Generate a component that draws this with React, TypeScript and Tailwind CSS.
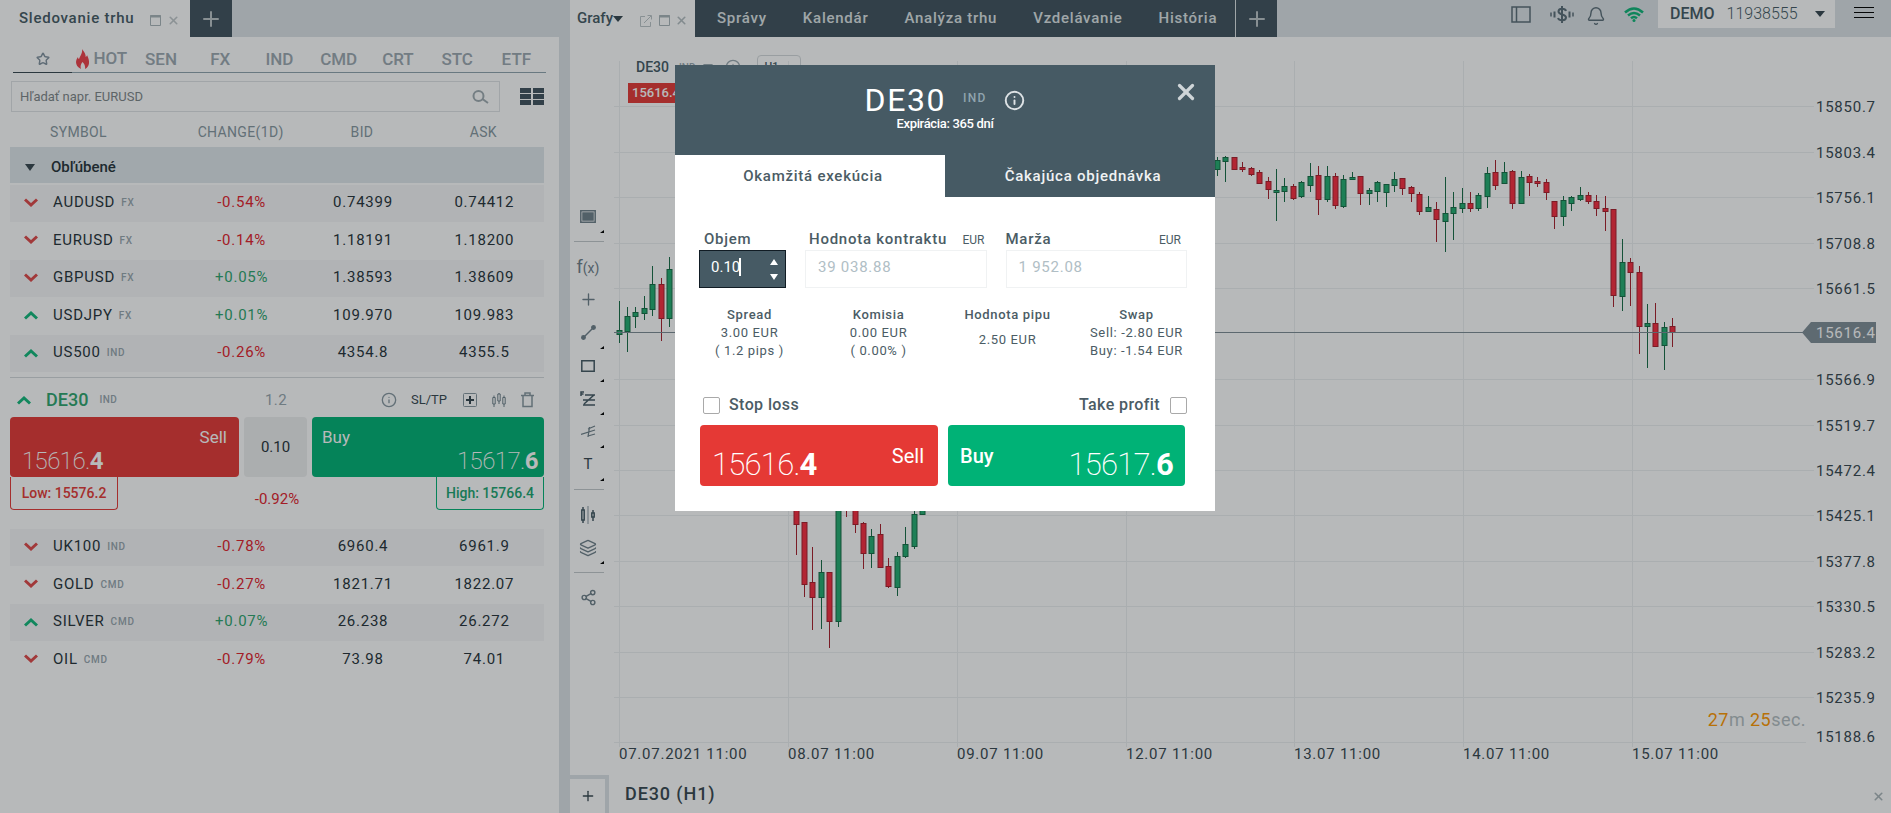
import { Bell, Info, Layers, Plus, Share2, Star, X } from 'lucide-react'
import type { ReactNode } from 'react'

type Quote = { symbol: string; group: string; up: boolean; change: string; bid: string; ask: string }

const quotes: Quote[] = [
  { symbol: 'AUDUSD', group: 'FX', up: false, change: '-0.54%', bid: '0.74399', ask: '0.74412' },
  { symbol: 'EURUSD', group: 'FX', up: false, change: '-0.14%', bid: '1.18191', ask: '1.18200' },
  { symbol: 'GBPUSD', group: 'FX', up: false, change: '+0.05%', bid: '1.38593', ask: '1.38609' },
  { symbol: 'USDJPY', group: 'FX', up: true, change: '+0.01%', bid: '109.970', ask: '109.983' },
  { symbol: 'US500', group: 'IND', up: true, change: '-0.26%', bid: '4354.8', ask: '4355.5' },
]

const moreQuotes: Quote[] = [
  { symbol: 'UK100', group: 'IND', up: false, change: '-0.78%', bid: '6960.4', ask: '6961.9' },
  { symbol: 'GOLD', group: 'CMD', up: false, change: '-0.27%', bid: '1821.71', ask: '1822.07' },
  { symbol: 'SILVER', group: 'CMD', up: true, change: '+0.07%', bid: '26.238', ask: '26.272' },
  { symbol: 'OIL', group: 'CMD', up: false, change: '-0.79%', bid: '73.98', ask: '74.01' },
]

// [slot, rising, high, body top, body bottom, low]
const candles: number[][] = [
  [0, 1, 301, 330, 335, 343], [1, 1, 307, 316, 332, 352], [2, 1, 307, 312, 317, 328], [3, 1, 296, 308, 314, 320],
  [4, 1, 266, 284, 310, 316], [5, 0, 278, 284, 319, 341], [6, 1, 257, 269, 319, 327],
  [21, 0, 500, 500, 525, 555], [22, 0, 522, 522, 585, 597], [23, 0, 547, 582, 598, 630], [24, 1, 560, 572, 598, 629],
  [25, 0, 572, 572, 622, 648], [26, 1, 480, 480, 622, 627], [27, 0, 490, 490, 505, 517], [28, 0, 490, 490, 525, 533],
  [29, 0, 522, 523, 554, 569], [30, 1, 529, 536, 554, 568], [31, 0, 524, 534, 568, 568], [32, 0, 558, 566, 587, 588],
  [33, 1, 552, 556, 588, 596], [34, 1, 527, 544, 557, 558], [35, 1, 505, 514, 547, 549], [36, 1, 500, 500, 515, 515],
  [71, 1, 157, 160, 170, 176], [72, 1, 156, 157, 162, 182], [73, 0, 157, 157, 170, 170], [74, 0, 162, 167, 170, 172],
  [75, 0, 167, 168, 175, 176], [76, 0, 170, 172, 184, 184], [77, 0, 177, 181, 190, 199], [78, 1, 169, 190, 193, 221],
  [79, 1, 178, 186, 192, 202], [80, 0, 184, 186, 199, 200], [81, 1, 181, 182, 197, 198], [82, 1, 163, 176, 186, 192],
  [83, 0, 166, 175, 200, 215], [84, 1, 166, 176, 200, 202], [85, 0, 173, 176, 206, 209], [86, 1, 175, 179, 207, 208],
  [87, 1, 172, 177, 180, 180], [88, 0, 176, 176, 194, 205], [89, 1, 188, 190, 194, 205], [90, 1, 181, 182, 192, 202],
  [91, 1, 184, 184, 193, 207], [92, 1, 172, 179, 186, 192], [93, 0, 178, 178, 189, 195], [94, 0, 186, 187, 194, 202],
  [95, 0, 192, 194, 212, 215], [96, 1, 196, 207, 212, 212], [97, 0, 202, 209, 220, 242], [98, 1, 177, 213, 222, 252],
  [99, 1, 192, 207, 214, 240], [100, 1, 188, 203, 209, 213], [101, 0, 192, 203, 209, 212], [102, 1, 193, 195, 209, 211],
  [103, 1, 167, 173, 197, 208], [104, 0, 160, 172, 186, 190], [105, 1, 162, 172, 184, 184], [106, 0, 170, 171, 204, 209],
  [107, 1, 171, 177, 204, 204], [108, 0, 174, 176, 183, 196], [109, 0, 177, 181, 184, 187], [110, 0, 179, 182, 193, 200],
  [111, 0, 201, 201, 217, 229], [112, 1, 196, 200, 217, 226], [113, 1, 196, 197, 204, 211], [114, 1, 187, 195, 200, 201],
  [115, 0, 192, 195, 202, 204], [116, 0, 195, 201, 209, 216], [117, 0, 196, 208, 212, 231], [118, 0, 209, 209, 296, 307],
  [119, 1, 239, 262, 297, 311], [120, 0, 258, 262, 273, 306], [121, 0, 266, 272, 327, 354], [122, 1, 304, 323, 327, 368],
  [123, 0, 303, 323, 347, 347], [124, 1, 322, 327, 346, 370], [125, 0, 318, 326, 333, 347],
]

const priceLines: [number, string][] = [
  [106, '15850.7'], [152, '15803.4'], [197, '15756.1'], [243, '15708.8'], [288, '15661.5'], [379, '15566.9'],
  [425, '15519.7'], [470, '15472.4'], [515, '15425.1'], [561, '15377.8'], [606, '15330.5'], [652, '15283.2'], [697, '15235.9'],
]

const days: [number, string][] = [
  [619, '07.07.2021 11:00'], [788, '08.07 11:00'], [957, '09.07 11:00'], [1126, '12.07 11:00'],
  [1294, '13.07 11:00'], [1463, '14.07 11:00'], [1632, '15.07 11:00'],
]

function Chevron({ up }: { up: boolean }) {
  return (
    <svg width="14" height="10" viewBox="0 0 14 10" fill="none" strokeWidth="3" className={up ? 'stroke-[#12b87a]' : 'stroke-[#e04848]'}>
      <path d={up ? 'M1 8.5 7 3l6 5.5' : 'M1 1.5 7 7l6-5.5'} />
    </svg>
  )
}

function WindowIcon() {
  return (
    <svg width="11" height="11" viewBox="0 0 11 11" fill="none" className="stroke-[#aab5b9]">
      <path d="M.5 .5h10v10H.5z" />
      <path d="M0 1.5h11" strokeWidth="2" />
    </svg>
  )
}

function QuoteRow({ quote, index }: { quote: Quote; index: number }) {
  return (
    <tr className={index % 2 === 0 ? 'h-[37px] bg-[#f7f7f8] *:pb-0.5' : 'h-[38px] *:pb-0.5'}>
      <td>
        <div className="flex items-center pl-3.5">
          <Chevron up={quote.up} />
          <span className="ml-[15px]">{quote.symbol}</span>
          <span className="ml-1.5 text-[10px] font-medium text-[#98a6ae]">{quote.group}</span>
        </div>
      </td>
      <td className={quote.change.startsWith('-') ? 'pl-0.5 text-[#e3212c]' : 'pl-0.5 text-[#2ea56e]'}>{quote.change}</td>
      <td className="pl-0.5">{quote.bid}</td>
      <td className="pl-0.5">{quote.ask}</td>
    </tr>
  )
}

function ExpandedQuote() {
  return (
    <div className="mt-[5px] h-[152px] border-t border-[#d5d9dc] text-left tracking-normal">
      <div className="flex h-[39px] items-center pt-1">
        <div className="flex w-[234px] items-center pl-[7px]">
          <Chevron up />
          <span className="ml-[15px] text-lg font-medium text-[#2ea56e]">DE30</span>
          <span className="ml-[11px] text-[10px] font-medium tracking-wider text-[#98a6ae]">IND</span>
        </div>
        <span className="w-16 pt-0.5 text-center text-[15px] tracking-wide text-[#98a6ae]">1.2</span>
        <div className="flex flex-1 items-center justify-end pr-2.5 text-[#8797a0]">
          <button aria-label="Info"><Info size={16} strokeWidth={2} /></button>
          <button className="ml-3.5 text-[13px] text-[#37474f]">SL/TP</button>
          <button aria-label="Nový pokyn" className="ml-4">
            <svg width="14" height="14" viewBox="0 0 14 14" fill="none" className="stroke-[#8797a0]">
              <rect x=".5" y=".5" width="13" height="13" rx="1" />
              <path d="M7 3v8M3 7h8" strokeWidth="2" className="stroke-[#37474f]" />
            </svg>
          </button>
          <button aria-label="Graf" className="ml-[15px]">
            <svg width="14" height="14" viewBox="0 0 14 14" fill="none" className="stroke-[#6f808a]">
              <path d="M2 2.500v2M2 11v3M7 0v1M7 8v3M12 2.500v2M12 11v3M.8 4.500h2.400v6.500H.8zM5.800 1h2.400v7H5.800zM10.800 4.500h2.400v6.500h-2.400z" />
            </svg>
          </button>
          <button aria-label="Odstrániť" className="ml-[15px]">
            <svg width="13" height="16" viewBox="0 0 13 16" fill="none" strokeWidth="1.500" className="stroke-[#8797a0]">
              <path d="M0 3.500h13M4 3V1h5v2M2 3.500v11h9v-11" />
            </svg>
          </button>
        </div>
      </div>
      <div className="flex gap-[5px]">
        <button className="relative h-[60px] w-[229px] rounded bg-[#e53935] text-white">
          <span className="absolute right-3 top-2 text-[17px]">Sell</span>
          <span className="absolute bottom-1 left-3 text-2xl leading-6 font-extralight tracking-tight">15616.<b className="font-bold">4</b></span>
        </button>
        <label className="flex w-[63px] items-center justify-center rounded bg-[#eeeff0] text-[15px]">
          <input aria-label="Objem DE30" defaultValue="0.10" className="w-10 bg-transparent text-center outline-none" />
        </label>
        <button className="relative h-[60px] flex-1 rounded bg-[#00b274] text-white">
          <span className="absolute left-2.5 top-2 text-[17px]">Buy</span>
          <span className="absolute bottom-1 right-1.5 text-2xl leading-6 font-extralight tracking-tight">15617.<b className="font-bold">6</b></span>
        </button>
      </div>
      <div className="flex h-[33px] justify-between text-[14px] font-medium">
        <span className="flex w-[108px] items-center justify-center rounded-b border border-t-0 border-[#e53935] pt-px text-[#e53935]">Low: 15576.2</span>
        <span className="flex items-end pb-px text-[15px] leading-5 font-normal text-[#e3212c]">-0.92%</span>
        <span className="flex w-[108px] items-center justify-center rounded-b border border-t-0 border-[#00b274] pt-px text-[#1ba570]">High: 15766.4</span>
      </div>
    </div>
  )
}

function MarketWatch() {
  return (
    <aside className="flex w-[559px] shrink-0 flex-col bg-white">
      <div className="flex h-[37px] bg-[#dde3e7]">
        <div className="flex items-center bg-white pl-[19px] pr-2.5 text-[15px] font-medium tracking-wider text-[#455a64]">
          <span className="w-[131px]">Sledovanie trhu</span>
          <span className="mt-1 flex items-center gap-1.5"><WindowIcon /><X size={13} strokeWidth={3} className="text-[#c0c7ca]" /></span>
        </div>
        <button aria-label="Pridať" className="flex w-[42px] items-center justify-center bg-[#41525d] text-[#bcc4c8]"><Plus size={24} /></button>
      </div>
      <div className="pl-2.5 pr-[15px]">
        <nav className="ml-[3px] mr-[-2px] mt-2 flex h-7 items-stretch text-center text-[17px] font-medium text-[#9ca8b0]">
          <button aria-label="Obľúbené" className="flex flex-1 items-center justify-center border-b border-[#37474f] pt-px"><Star size={14} strokeWidth={2.5} className="text-[#8393a0]" /></button>
          <button className="flex flex-1 items-center justify-center gap-1 border-b border-[#90a4ae] pt-px">
            <svg width="13" height="20" viewBox="0 0 13 20" className="shrink-0 fill-[#f0414a]">
              <path d="M6 0c3 4 4 6 3.500 8 1-.5 1.500-1 1.500-2 3 6 3 11-2 14 .5-3-.5-5-2.500-7-1.500 2-2.500 4-1.500 7C-1 17-1 12 2 8c0 1 .5 2 1 2C4 7 7 4 6 0z" />
            </svg>
            HOT
          </button>
          {['SEN', 'FX', 'IND', 'CMD', 'CRT', 'STC', 'ETF'].map((tab) => (
            <button key={tab} className="flex-1 border-b border-[#90a4ae] pt-0.5">{tab}</button>
          ))}
        </nav>
        <div className="mt-2 flex h-[31px] items-center justify-between">
          <label className="ml-px flex h-full w-[489px] items-center border border-[#e0e3e5] px-2">
            <input aria-label="Hľadať" placeholder="Hľadať napr. EURUSD" className="flex-1 bg-transparent text-[13px] outline-none placeholder:text-[#7f8689]" />
            <svg width="17" height="14" viewBox="0 0 17 14" fill="none" strokeWidth="2" className="mr-0.5 stroke-[#a0abb1]">
              <circle cx="6.500" cy="6" r="5" />
              <path d="m10.500 9 5.500 4" />
            </svg>
          </label>
          <button aria-label="Zobrazenie">
            <svg width="24" height="17" viewBox="0 0 24 17" className="fill-[#41525d]">
              <path d="M0 0h11v5H0zM13 0h11v5H13zM0 6h11v5H0zM13 6h11v5H13zM0 12h11v5H0zM13 12h11v5H13z" />
            </svg>
          </button>
        </div>
        <table className="w-full table-fixed text-center text-[15px] tracking-wider text-[#263238]">
          <colgroup><col className="w-[170px]" /><col /><col /><col /></colgroup>
          <thead className="text-[14px] tracking-wide text-[#8797a0]">
            <tr className="h-[35px] *:pt-1.5 *:font-normal">
              <th className="pl-10 text-left">SYMBOL</th>
              <th>CHANGE(1D)</th>
              <th>BID</th>
              <th>ASK</th>
            </tr>
          </thead>
          <tbody>
            <tr className="h-9 bg-[#e0e7eb] text-left">
              <th colSpan={4} className="pt-1 font-medium tracking-normal">
                <span className="flex items-center gap-4 pl-[15px]">
                  <svg width="10" height="7" viewBox="0 0 10 7" className="fill-[#37474f]"><path d="M0 0h10L5 7z" /></svg>
                  Obľúbené
                </span>
              </th>
            </tr>
            <tr className="h-0.5"><td colSpan={4} /></tr>
            {quotes.map((quote, i) => <QuoteRow key={quote.symbol} quote={quote} index={i} />)}
            <tr><td colSpan={4}><ExpandedQuote /></td></tr>
            {moreQuotes.map((quote, i) => <QuoteRow key={quote.symbol} quote={quote} index={i} />)}
          </tbody>
        </table>
      </div>
    </aside>
  )
}

function TopBar() {
  return (
    <header className="flex h-[37px] bg-[#dde3e7] font-medium">
      <div className="flex w-[125px] items-center bg-white pl-[7px] text-[15px] text-[#455a64]">
        Grafy
        <svg width="10" height="6" viewBox="0 0 10 6" className="fill-[#37474f]"><path d="M0 0h10L5 6z" /></svg>
        <span className="ml-[17px] mt-1 flex items-center gap-[7px]">
          <svg width="12" height="12" viewBox="0 0 12 12" fill="none" className="stroke-[#bcc4c8]"><path d="M5 1.500H.5v10h10V7M4 8l7-7M7.500.5h4v4" /></svg>
          <WindowIcon />
          <X size={13} strokeWidth={3} className="-ml-0.5 text-[#b4bdc1]" />
        </span>
      </div>
      <nav className="flex items-center bg-[#41525d] pl-1 text-[15px] tracking-wider text-[#dfe4e6]">
        {['Správy', 'Kalendár', 'Analýza trhu', 'Vzdelávanie', 'História'].map((item) => (
          <a key={item} href="#" className="px-[18px]">{item}</a>
        ))}
        <button aria-label="Pridať kartu" className="flex h-full w-[42px] items-center justify-center border-l border-[#dfe4e6] text-[#bcc4c8]"><Plus size={24} /></button>
      </nav>
      <div className="ml-auto flex items-start pr-[17px]">
        <button aria-label="Rozloženie" className="mt-1.5">
          <svg width="20" height="17" viewBox="0 0 20 17" fill="none" strokeWidth="1.500" className="stroke-[#5b6d77]"><path d="M1 1h18v15H1zM5.500 1v15" /></svg>
        </button>
        <button aria-label="Platby" className="ml-[19px] mt-1.5">
          <svg width="24" height="17" viewBox="0 0 24 17" fill="none" strokeWidth="2" className="stroke-[#5b6d77]">
            <path d="M16 5C15 2 8.500 2 8.500 5.500S16 8 16 11.500 9 15 8 12M12 0v17M4.500 5.500v6M19.500 5.500v6" />
            <path d="M1 6.500v4M23 6.500v4" strokeWidth="1.500" />
          </svg>
        </button>
        <button aria-label="Upozornenia" className="ml-3 mt-1.5 text-[#5b6d77]"><Bell size={20} strokeWidth={1.7} /></button>
        <span className="ml-[18px] mt-[7px]">
          <svg width="20" height="15" viewBox="0 0 20 15" fill="none" strokeWidth="2.500" className="stroke-[#0fb578]">
            <path d="M1 5.500q9-8 18 0M4 8.500q6-5 12 0M7 11.200q3-2.500 6 0" />
            <circle cx="10" cy="13.500" r="1.500" strokeWidth="0" className="fill-[#0fb578]" />
          </svg>
        </span>
        <button className="ml-3.5 flex h-7 w-[177px] items-center bg-white pb-px pl-3 text-[#455a64]">
          DEMO<span className="ml-3 font-light">11938555</span>
          <svg width="10" height="6" viewBox="0 0 10 6" className="ml-auto mr-2.5 fill-[#37474f]"><path d="M0 0h10L5 6z" /></svg>
        </button>
        <button aria-label="Menu" className="ml-[19px] mt-[7px]">
          <svg width="20" height="11" viewBox="0 0 20 11" className="stroke-black"><path d="M0 .5h20M0 5.500h20M0 10.500h20" /></svg>
        </button>
      </div>
    </header>
  )
}

function Tool({ label, corner, children }: { label: string; corner?: boolean; children: ReactNode }) {
  return (
    <button aria-label={label} className="relative flex h-[33px] w-9 items-center justify-center text-[#6f808a]">
      {children}
      {corner && <svg width="4" height="3" viewBox="0 0 4 3" className="absolute bottom-0 right-0.5 fill-black"><path d="M4 0v3H0z" /></svg>}
    </button>
  )
}

function Divider() {
  return <hr className="my-2 ml-1 h-px w-[30px] border-0 bg-[#c3c9cc]" />
}

function ChartTools() {
  return (
    <div className="w-10 shrink-0 pt-[163px]">
      <Tool label="Šablóna" corner>
        <svg width="16" height="13" viewBox="0 0 16 13" fill="none" strokeWidth="1.500" stroke="currentColor"><path d="M.8.8h14.400v11.400H.8z" /><path d="M3 3h10v7H3z" fill="currentColor" /></svg>
      </Tool>
      <Divider />
      <Tool label="Indikátory"><span className="text-lg">f<span className="text-sm">(x)</span></span></Tool>
      <Tool label="Kríž"><Plus size={19} strokeWidth={1.7} /></Tool>
      <Tool label="Čiara" corner>
        <svg width="15" height="15" viewBox="0 0 15 15" fill="none" stroke="currentColor" strokeWidth="1.500"><circle cx="2.500" cy="12.500" r="1.700" fill="currentColor" /><circle cx="12.500" cy="2.500" r="1.700" fill="currentColor" /><path d="m3 12 9-9" /></svg>
      </Tool>
      <Tool label="Obdĺžnik" corner>
        <svg width="14" height="12" viewBox="0 0 14 12" fill="none" strokeWidth="1.500" className="stroke-[#455a64]"><path d="M.8.8h12.400v10.400H.8z" /></svg>
      </Tool>
      <Tool label="Fibonacci" corner>
        <svg width="16" height="15" viewBox="0 0 16 15" fill="none" strokeWidth="1.500" className="stroke-[#455a64]"><path d="M1 5V1h3M1 3h2.500M5 4h10M3 9h12M3 14h12M4 13 14 4" /></svg>
      </Tool>
      <Tool label="Vidlica" corner>
        <svg width="15" height="13" viewBox="0 0 15 13" fill="none" stroke="currentColor" strokeWidth="1.300"><path d="m0 9.500 14-4.500M7 4l7-3M7 11l7-2M8.500 2 7 12" /></svg>
      </Tool>
      <Tool label="Text" corner><span className="text-[15px] text-[#37474f]">T</span></Tool>
      <Divider />
      <Tool label="Typ grafu">
        <svg width="14" height="18" viewBox="0 0 14 18" fill="none" strokeWidth="1.500" className="stroke-[#455a64]"><path d="M2 1v3M2 14v3M.8 4h2.400v10H.8zM12 4v3M12 11v4M10.800 7h2.400v4h-2.400z" /><path d="M7 0v18" strokeWidth="1" className="stroke-[#8797a0]" /></svg>
      </Tool>
      <Tool label="Vrstvy" corner><Layers size={18} strokeWidth={1.7} /></Tool>
      <Divider />
      <Tool label="Zdieľať"><Share2 size={17} strokeWidth={2} /></Tool>
    </div>
  )
}

function Chart() {
  return (
    <div className="relative flex-1">
      <svg viewBox="610 37 1281 738" className="block h-auto w-full text-[15px] tracking-wider" fontFamily="Roboto, sans-serif">
        <g shapeRendering="crispEdges" className="stroke-[#edeff1]">
          {priceLines.map(([y]) => <path key={y} d={`M614 ${y + 0.5}H1814`} />)}
          {days.map(([x]) => <path key={x} d={`M${x + 0.5} 61V747`} />)}
          <path d="M614 742.500H1806" />
        </g>
        {candles.map(([slot, rising, high, top, bottom, low]) => {
          const x = Math.round(619.5 + slot * 8.43) - 0.5
          return (
            <g key={slot} className={rising ? 'fill-[#23ac70] stroke-[#166c45]' : 'fill-[#f82b3e] stroke-[#a81f2c]'}>
              <path d={`M${x} ${high}V${low}`} />
              <rect x={x - 2.5} y={top + 0.5} width="5" height={Math.max(bottom - top - 1, 2)} />
            </g>
          )
        })}
        <path d="M614 332.500H1804" className="stroke-[#7d8c94]" />
        <path d="m1802 332.500 9-10.500h65v21h-65z" className="fill-[#808e97]" />
        <g className="fill-[#37474f]">
          {priceLines.map(([y, label]) => <text key={label} x="1816" y={y + 6}>{label}</text>)}
          <text x="1816" y="742">15188.6</text>
          {days.map(([x, label]) => <text key={label} x={x} y="759">{label}</text>)}
        </g>
        <text x="1816" y="338" className="fill-white">15616.4</text>
        <text x="1806" y="726" textAnchor="end" className="fill-[#b5bec2] text-lg tracking-wide">
          <tspan className="fill-[#ff9800]">27</tspan>m <tspan className="fill-[#ff9800]">25</tspan>sec.
        </text>
      </svg>
      <div className="absolute left-[26px] top-[18px] flex items-center text-[10px] font-medium text-[#98a6ae]">
        <span className="text-sm text-[#455a64]">DE30</span>
        <span className="ml-2.5">IND</span>
        <svg width="10" height="6" viewBox="0 0 10 6" className="ml-2 fill-[#98a6ae]"><path d="M0 0h10L5 6z" /></svg>
        <Info size={16} className="ml-3" />
        <button className="ml-4 h-6 w-11 rounded-sm border border-[#d5d9dc] pl-1.5 text-left text-[11px] text-[#455a64]">H1</button>
      </div>
      <span className="absolute left-[18px] top-[46px] flex h-5 items-center bg-[#e53935] px-1 text-[13px] font-medium text-white">15616.4</span>
    </div>
  )
}

function Stat({ title, children }: { title: string; children: ReactNode }) {
  return (
    <div>
      <dt className="font-medium">{title}</dt>
      <dd>{children}</dd>
    </div>
  )
}

function OrderDialog() {
  const field = 'h-[38px] w-full border border-[#f0f2f3] bg-white pb-1 pl-3 tracking-wider text-[#b0bec5] outline-none'
  return (
    <div role="dialog" aria-label="DE30" className="w-[540px] bg-white text-[15px] text-[#4b5c65]">
      <div className="relative flex h-[90px] flex-col items-center bg-[#465a64] pt-[17px] text-white">
        <div className="flex h-9 items-center">
          <h2 className="text-[32px] leading-9 tracking-wider">DE30</h2>
          <span className="mb-1 ml-[17px] text-xs font-medium tracking-widest text-[#90a4ae]">IND</span>
          <Info size={21} strokeWidth={2.2} className="ml-[18px] text-[#dde2e5]" />
        </div>
        <p className="text-[13px] leading-3 font-medium tracking-tight">Expirácia: 365 dní</p>
        <button aria-label="Zavrieť" className="absolute right-4 top-3.5 text-[#cfd5d8]"><X size={26} strokeWidth={3} /></button>
      </div>
      <div role="tablist" className="grid h-[42px] grid-cols-2 font-medium tracking-wider">
        <button role="tab" aria-selected="true" className="pl-1.5">Okamžitá exekúcia</button>
        <button role="tab" className="bg-[#465a64] pl-1.5 text-[#f0f2f3]">Čakajúca objednávka</button>
      </div>
      <form className="pt-8">
        <div className="flex gap-[19px] pl-6 pr-7">
          <div className="w-[87px]">
            <label htmlFor="volume" className="block h-[21px] pl-[5px] font-medium leading-5 tracking-wider">Objem</label>
            <div className="relative">
              <input id="volume" defaultValue="0.10" className="h-[38px] w-full border border-[#111c24] bg-[#465a64] pb-1 pl-[11px] text-white outline-none" />
              <span className="absolute left-10 top-2 h-[18px] w-0.5 bg-white" />
              <svg width="8" height="21" viewBox="0 0 8 21" className="absolute right-2 top-[9px] fill-white"><path d="M4 0l4 6H0zM0 15h8l-4 6z" /></svg>
            </div>
          </div>
          <div className="flex-1">
            <div className="flex h-[21px] items-start justify-between pl-1 pr-0.5">
              <label htmlFor="value" className="font-medium leading-5 tracking-wider">Hodnota kontraktu</label>
              <span className="text-xs leading-[22px]">EUR</span>
            </div>
            <input id="value" readOnly value="39 038.88" className={field} />
          </div>
          <div className="flex-1">
            <div className="flex h-[21px] items-start justify-between pr-1.5">
              <label htmlFor="margin" className="font-medium leading-5 tracking-wider">Marža</label>
              <span className="text-xs leading-[22px]">EUR</span>
            </div>
            <input id="margin" readOnly value="1 952.08" className={field} />
          </div>
        </div>
        <dl className="mt-[18px] grid grid-cols-4 pl-2.5 pr-3.5 text-center text-[13px] leading-[18px] tracking-wider">
          <Stat title="Spread">3.00 EUR<br />( 1.2 pips )</Stat>
          <Stat title="Komisia">0.00 EUR<br />( 0.00% )</Stat>
          <Stat title="Hodnota pipu"><span className="block pt-[7px]">2.50 EUR</span></Stat>
          <Stat title="Swap">Sell: -2.80 EUR<br />Buy: -1.54 EUR</Stat>
        </dl>
        <div className="mt-[27px] flex h-9 items-center justify-between px-7 text-base font-medium tracking-wide">
          <label className="flex items-center gap-[9px]">
            <input type="checkbox" className="size-[17px] appearance-none rounded-xs border border-[#a9a9a9] bg-white" />
            Stop loss
          </label>
          <label className="flex items-center gap-2.5">
            Take profit
            <input type="checkbox" className="size-[17px] appearance-none rounded-xs border border-[#a9a9a9] bg-white" />
          </label>
        </div>
        <div className="flex gap-2.5 pb-[25px] pl-[25px] pr-[30px] pt-0.5 text-white">
          <button type="button" className="flex h-[61px] w-[238px] items-center justify-between rounded bg-[#e53935] pl-3 pr-3.5">
            <span className="pt-[18px] text-[31px] leading-10 font-extralight tracking-tight">15616.<b className="font-bold">4</b></span>
            <span className="text-xl">Sell</span>
          </button>
          <button type="button" className="flex h-[61px] flex-1 items-center justify-between rounded bg-[#00b276] px-3">
            <span className="text-xl font-medium">Buy</span>
            <span className="pt-[18px] text-[31px] leading-10 font-extralight tracking-tight">15617.<b className="font-bold">6</b></span>
          </button>
        </div>
      </form>
    </div>
  )
}

export default function App() {
  return (
    <div className="flex min-h-screen bg-[#dde3e7] font-['Roboto',sans-serif] text-base">
      <MarketWatch />
      <main className="ml-[11px] flex min-w-0 flex-1 flex-col bg-white">
        <TopBar />
        <div className="flex">
          <ChartTools />
          <Chart />
        </div>
        <footer className="flex flex-1 items-stretch pr-1.5 text-lg font-medium tracking-wider text-[#37474f]">
          <button aria-label="Nový graf" className="flex w-[39px] items-center justify-center border-r-4 border-t-4 border-[#dde3e7]"><Plus size={16} strokeWidth={2} /></button>
          <span className="ml-4 flex-1 self-center">DE30 (H1)</span>
          <button aria-label="Zavrieť graf" className="self-center pt-1 text-[#aab5b9]"><X size={13} strokeWidth={3} /></button>
        </footer>
      </main>

      {/* Order ticket over the dimmed workspace */}
      <div className="fixed inset-0 flex items-start justify-center bg-[#0f161c]/30 pr-px pt-[65px]">
        <OrderDialog />
      </div>
    </div>
  )
}
